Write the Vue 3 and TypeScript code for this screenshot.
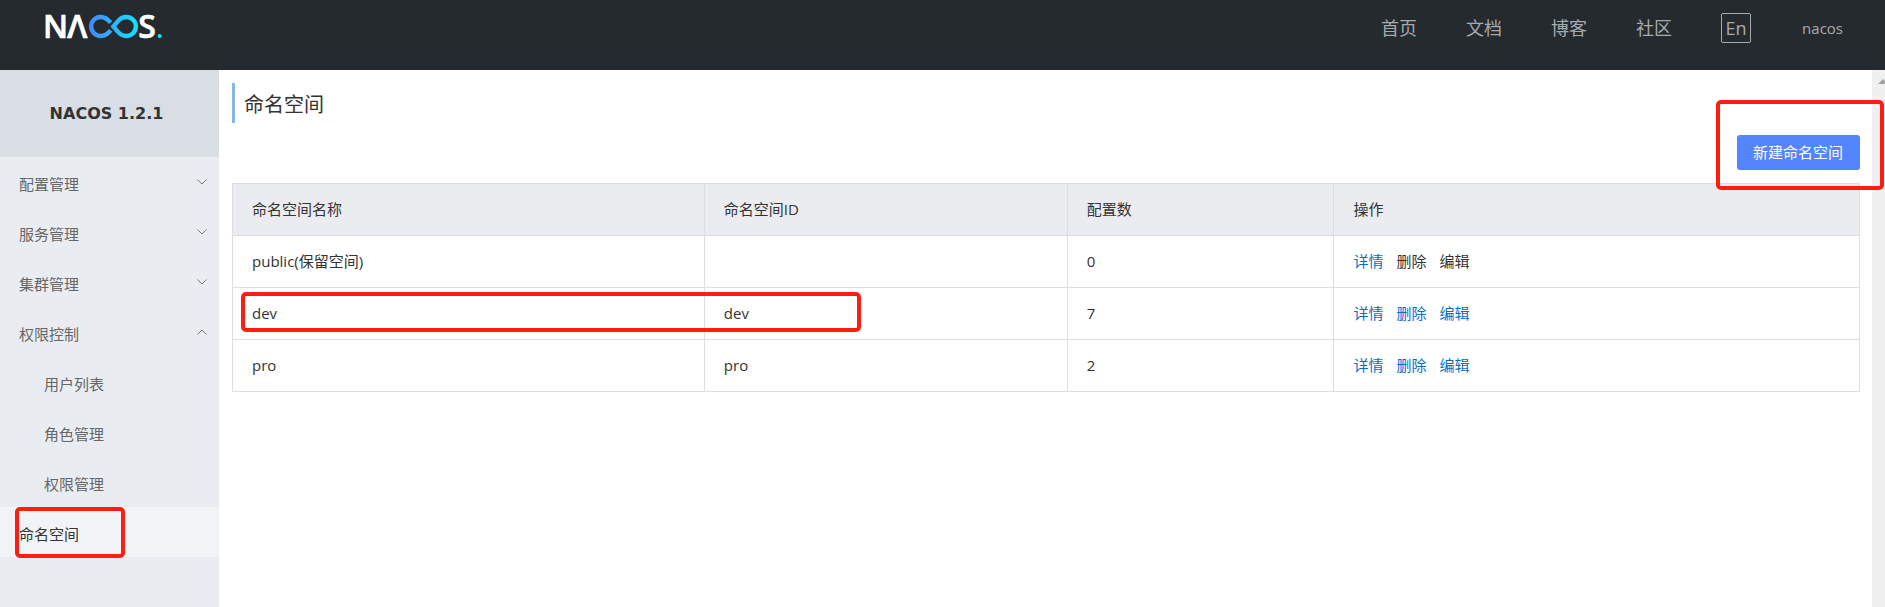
<script setup lang="ts">
interface MenuItem {
  label: string
  arrow?: 'down' | 'up'
  child?: boolean
  active?: boolean
}

interface Namespace {
  name: string
  id: string
  count: number
  reserved?: boolean
  marked?: boolean
}

const links: string[] = ['首页', '文档', '博客', '社区']

const menu: MenuItem[] = [
  { label: '配置管理', arrow: 'down' },
  { label: '服务管理', arrow: 'down' },
  { label: '集群管理', arrow: 'down' },
  { label: '权限控制', arrow: 'up' },
  { label: '用户列表', child: true },
  { label: '角色管理', child: true },
  { label: '权限管理', child: true },
  { label: '命名空间', active: true },
]

const rows: Namespace[] = [
  { name: 'public(保留空间)', id: '', count: 0, reserved: true },
  { name: 'dev', id: 'dev', count: 7, marked: true },
  { name: 'pro', id: 'pro', count: 2 },
]
</script>

<template>
  <div class="page">
    <header class="topbar">
      <a href="#" class="logo" aria-label="Nacos">
        <svg width="118" height="26" viewBox="0 0 354 78">
          <defs>
            <linearGradient id="loop" gradientUnits="userSpaceOnUse" x1="132" y1="0" x2="278" y2="0">
              <stop offset="0" stop-color="#4688ff" />
              <stop offset="1" stop-color="#12e4fb" />
            </linearGradient>
          </defs>
          <g class="logo-text">
            <text x="-9" y="74">N</text>
            <text x="64" y="74">Λ</text>
            <text x="277" y="74">S</text>
          </g>
          <g fill="none" stroke="url(#loop)" stroke-width="13">
            <path d="M194 29 C184 17 176 12 164 12 A28.500 28.500 0 0 0 164 69 C176 69 184 64 194 52" />
            <path d="M202 40.500 L218 22 C225 14 233 12 241 12 A28.500 28.500 0 0 1 241 69 C233 69 225 67 218 59 Z" />
          </g>
          <circle cx="341" cy="69" r="6" fill="#12e4fb" />
        </svg>
      </a>
      <nav class="links">
        <a v-for="l in links" :key="l" href="#">{{ l }}</a>
        <button type="button" class="lang">En</button>
        <a href="#" class="user">nacos</a>
      </nav>
    </header>

    <div class="body">
      <aside class="sidebar">
        <h1 class="version">NACOS 1.2.1</h1>
        <nav>
          <a
            v-for="m in menu"
            :key="m.label"
            href="#"
            class="item"
            :class="{ child: m.child, active: m.active }"
          >
            <span class="label">{{ m.label }}</span>
            <svg v-if="m.arrow" width="10" height="6" viewBox="0 0 10 6" fill="none" stroke="#777b80">
              <path :d="m.arrow === 'down' ? 'M0.500 0.500 L5 5 L9.500 0.500' : 'M0.500 5.500 L5 1 L9.500 5.500'" />
            </svg>
            <span v-if="m.active" class="mark mark-menu"></span>
          </a>
        </nav>
      </aside>

      <main class="content">
        <h2 class="title">命名空间</h2>
        <div class="actions">
          <button type="button" class="create">新建命名空间</button>
          <span class="mark mark-create"></span>
        </div>
        <table class="grid">
          <colgroup>
            <col class="c-name" />
            <col class="c-id" />
            <col class="c-count" />
            <col />
          </colgroup>
          <thead>
            <tr>
              <th>命名空间名称</th>
              <th>命名空间ID</th>
              <th>配置数</th>
              <th>操作</th>
            </tr>
          </thead>
          <tbody>
            <tr v-for="r in rows" :key="r.name">
              <td :class="{ anchor: r.marked }">
                {{ r.name }}<span v-if="r.marked" class="mark mark-row"></span>
              </td>
              <td>{{ r.id }}</td>
              <td>{{ r.count }}</td>
              <td>
                <div class="ops">
                  <a href="#">详情</a>
                  <a href="#" :class="{ off: r.reserved }">删除</a>
                  <a href="#" :class="{ off: r.reserved }">编辑</a>
                </div>
              </td>
            </tr>
          </tbody>
        </table>
      </main>

      <div class="scroll">
        <svg width="7" height="5" viewBox="0 0 7 5"><path d="M0 5 L5 0 L7 2 V5 Z" fill="#a3a3a3" /></svg>
      </div>
    </div>
  </div>
</template>

<style>
body {
  margin: 0;
}
</style>

<style scoped>
.page {
  display: flex;
  flex-direction: column;
  min-height: 100vh;
  background: #fff;
  color: #333;
  font: 15px/20px "Open Sans", "Noto Sans CJK SC", sans-serif;
}
.page * {
  box-sizing: border-box;
}
a {
  text-decoration: none;
  color: inherit;
}
button {
  font: inherit;
  cursor: pointer;
}
.topbar {
  display: flex;
  justify-content: space-between;
  align-items: flex-start;
  height: 70px;
  padding: 13px 42px 0 46px;
  background: #252a2f;
}
.logo svg {
  display: block;
  overflow: visible;
}
.logo-text {
  fill: #fff;
  stroke: #fff;
  stroke-width: 2px;
  font-family: "Open Sans", sans-serif;
  font-size: 96px;
  font-weight: 600;
}
.links {
  display: flex;
  align-items: center;
  gap: 49px;
  height: 30px;
  color: #a8aaac;
  font-size: 18px;
}
.lang {
  width: 30px;
  height: 30px;
  padding: 0;
  border: 1px solid #a8aaac;
  border-radius: 2px;
  background: none;
  color: inherit;
  line-height: 24px;
}
.user {
  padding-left: 2px;
  font-size: 15px;
}
.body {
  display: flex;
  flex: 1;
}
.sidebar {
  flex: 0 0 219px;
  background: #e9edf2;
}
.version {
  margin: 0;
  padding-right: 6px;
  background: #d9dde4;
  font: bold 16px/87px "DejaVu Sans", sans-serif;
  text-align: center;
}
.item {
  position: relative;
  display: flex;
  justify-content: space-between;
  align-items: center;
  height: 50px;
  padding: 0 12px 0 19px;
  color: #666;
}
.label {
  padding-top: 4px;
}
.item.child {
  padding-left: 44px;
}
.item.active {
  background: #f1f3f7;
  color: #333;
}
.content {
  flex: 1;
  min-width: 0;
  padding: 13px 12px 0 13px;
}
.title {
  height: 40px;
  margin: 0;
  padding: 2px 0 0 9px;
  border-left: 3px solid #89b7e2;
  font-size: 20px;
  font-weight: 400;
  line-height: 40px;
}
.actions {
  position: relative;
  display: flex;
  justify-content: flex-end;
  padding: 12px 0 13px;
}
.create {
  height: 35px;
  padding: 0 17px 2px 16px;
  border: 0;
  border-radius: 3px;
  background: #5584ff;
  color: #fff;
}
.grid {
  width: 100%;
  table-layout: fixed;
  border-collapse: collapse;
}
.c-name {
  width: 29%;
}
.c-id {
  width: 22.3%;
}
.c-count {
  width: 16.4%;
}
th,
td {
  height: 52px;
  padding: 0 19px 2px;
  border: 1px solid #dcdee3;
  font-weight: 400;
  text-align: left;
}
th {
  background: #ebecf0;
}
.anchor {
  position: relative;
}
.ops {
  display: flex;
  gap: 13px;
  color: #0070cc;
}
.ops .off {
  color: #333;
}
.scroll {
  display: flex;
  justify-content: flex-end;
  flex: 0 0 13px;
  padding-top: 9px;
  background: #f0f0f0;
}
.mark {
  position: absolute;
  z-index: 1;
  border: 4px solid #ff1c10;
  border-radius: 5px;
  pointer-events: none;
}
.mark-menu {
  top: 0;
  left: 15px;
  width: 110px;
  height: 51px;
}
.mark-row {
  top: 4px;
  left: 8px;
  width: 620px;
  height: 40px;
}
.mark-create {
  top: -23px;
  right: -24px;
  width: 168px;
  height: 90px;
}
</style>
